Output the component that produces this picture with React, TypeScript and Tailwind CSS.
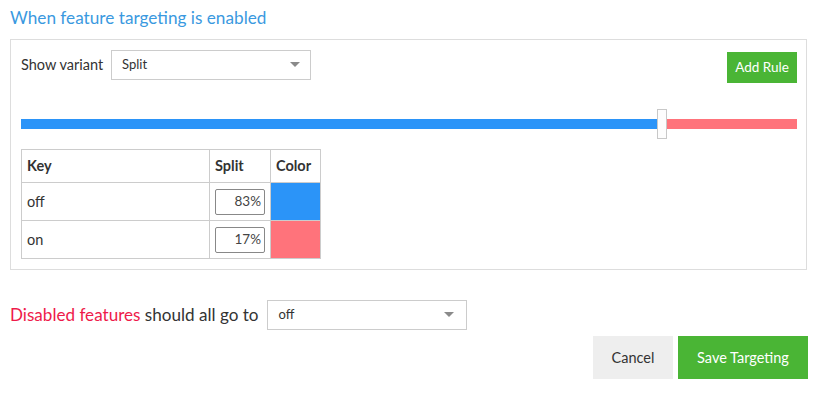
import React from "react";

function Caret() {
  return (
    <svg width="10" height="6" viewBox="0 0 10 6" className="shrink-0">
      <path d="M0 0 L10 0 L5 5 Z" fill="#8a8a8a" />
    </svg>
  );
}

export default function App() {
  return (
    <div className="w-[821px] h-[403px] bg-white text-[#333] font-['Lato',sans-serif]">
      <div className="pl-[10px] pr-[14px] pt-[7px]">
        <h2 className="text-[17.2px] leading-[22px] text-[#3a99e0] font-normal">When feature targeting is enabled</h2>
        <div className="mt-[10px] border border-[#dddddd] h-[231px] pl-[10px] pr-[9px] pt-[10px]">
          <div className="flex items-start justify-between">
            <div className="flex items-center gap-[8px]">
              <span className="text-[14.5px] leading-[20px]">Show variant</span>
              <div className="w-[200px] h-[30px] border border-[#cccccc] flex items-center justify-between pl-[10px] pr-[10px]">
                <span className="text-[13px]">Split</span>
                <Caret />
              </div>
            </div>
            <button className="mt-[2px] w-[70px] h-[31px] bg-[#4ab535] text-white text-[13.5px] flex items-center justify-center">Add Rule</button>
          </div>
          <div className="relative mt-[36px] h-[10px] flex">
            <div className="h-full bg-[#2b94f8]" style={{ width: "641px" }} />
            <div className="h-full flex-1 bg-[#ff737b]" />
            <div className="absolute left-[636px] top-[-10px] w-[10px] h-[30px] bg-[#fdfdfd] border border-[#c8c8c8]" />
          </div>
          <table className="mt-[20px] border-collapse text-[14.5px]">
            <thead>
              <tr className="h-[33px]">
                <th className="w-[188px] border border-[#cccccc] text-left pl-[5px] font-bold">Key</th>
                <th className="w-[61px] border border-[#cccccc] text-left pl-[5px] font-bold">Split</th>
                <th className="w-[50px] border border-[#cccccc] text-left pl-[5px] font-bold">Color</th>
              </tr>
            </thead>
            <tbody>
              <tr className="h-[38px]">
                <td className="border border-[#cccccc] pl-[5px]">off</td>
                <td className="border border-[#cccccc] px-[5px]">
                  <div className="w-[50px] h-[26px] border border-[#888] rounded-[2px] flex items-center justify-end pr-[3px] text-[13.5px] text-[#444]">83%</div>
                </td>
                <td className="border border-[#cccccc] bg-[#2b94f8]"></td>
              </tr>
              <tr className="h-[38px]">
                <td className="border border-[#cccccc] pl-[5px]">on</td>
                <td className="border border-[#cccccc] px-[5px]">
                  <div className="w-[50px] h-[26px] border border-[#888] rounded-[2px] flex items-center justify-end pr-[3px] text-[13.5px] text-[#444]">17%</div>
                </td>
                <td className="border border-[#cccccc] bg-[#ff737b]"></td>
              </tr>
            </tbody>
          </table>
        </div>
        <div className="mt-[30px] flex items-center gap-[8px]">
          <span className="text-[17.1px]"><span className="text-[#ee1a4a]">Disabled features</span> should all go to</span>
          <div className="w-[200px] h-[30px] border border-[#cccccc] flex items-center justify-between pl-[11px] pr-[12px]">
            <span className="text-[13px]">off</span>
            <Caret />
          </div>
        </div>
        <div className="mt-[6px] -mr-[1px] flex justify-end gap-[5px]">
          <button className="w-[80px] h-[43px] bg-[#eeeeee] text-[#333] text-[14.5px]">Cancel</button>
          <button className="w-[130px] h-[43px] bg-[#4ab535] text-white text-[14.5px]">Save Targeting</button>
        </div>
      </div>
    </div>
  );
}
